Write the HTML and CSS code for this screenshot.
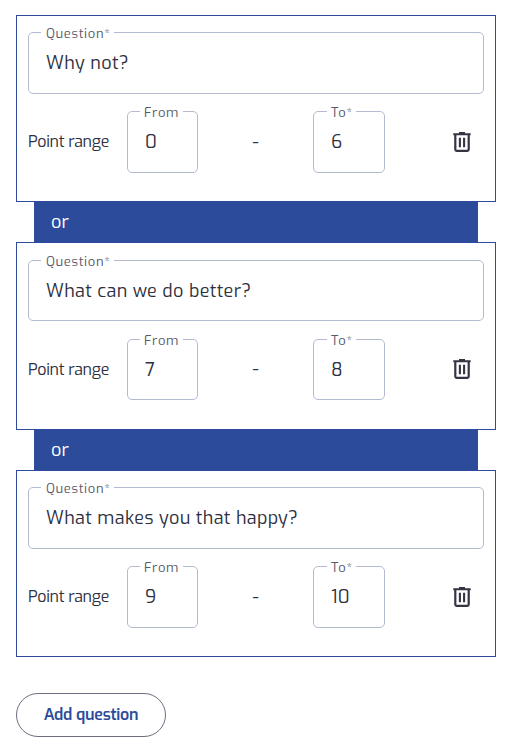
FILE: index.html
```html
<!DOCTYPE html>
<html lang="en">
<head>
  <meta charset="UTF-8">
  <meta name="viewport" content="width=device-width, initial-scale=1.0">
  <title>Questions</title>
  <link rel="stylesheet" href="styles.css">
</head>
<body>

<!-- Trash icon shared by all cards -->
<svg class="sprite" width="0" height="0">
  <symbol id="trash" viewBox="0 0 20 22">
    <path d="M1.3 3.3h17.4M7 2h6" fill="none" stroke="currentColor" stroke-width="2"/>
    <path d="M3.3 4v14.5q0 1.3 1.3 1.3h10.8q1.3 0 1.3-1.3V4" fill="none" stroke="currentColor" stroke-width="2.2"/>
    <path d="M7.9 6.8v9.4M12.1 6.8v9.4" fill="none" stroke="currentColor" stroke-width="2.1"/>
  </symbol>
</svg>

<form class="questions">
  <div class="card">
    <div class="field">
      <label class="field-label" for="q1">Question<span class="required">*</span></label>
      <input class="field-input" id="q1" type="text" value="Why not?">
    </div>
    <div class="range">
      <span class="range-title">Point range</span>
      <div class="field from">
        <label class="field-label" for="from1">From</label>
        <input class="field-input" id="from1" type="text" value="0">
      </div>
      <span class="dash">-</span>
      <div class="field to">
        <label class="field-label" for="to1">To<span class="required">*</span></label>
        <input class="field-input" id="to1" type="text" value="6">
      </div>
      <button class="delete" type="button" aria-label="Delete"><svg width="20" height="22"><use href="#trash"/></svg></button>
    </div>
  </div>

  <div class="separator">or</div>

  <div class="card">
    <div class="field">
      <label class="field-label" for="q2">Question<span class="required">*</span></label>
      <input class="field-input" id="q2" type="text" value="What can we do better?">
    </div>
    <div class="range">
      <span class="range-title">Point range</span>
      <div class="field from">
        <label class="field-label" for="from2">From</label>
        <input class="field-input" id="from2" type="text" value="7">
      </div>
      <span class="dash">-</span>
      <div class="field to">
        <label class="field-label" for="to2">To<span class="required">*</span></label>
        <input class="field-input" id="to2" type="text" value="8">
      </div>
      <button class="delete" type="button" aria-label="Delete"><svg width="20" height="22"><use href="#trash"/></svg></button>
    </div>
  </div>

  <div class="separator">or</div>

  <div class="card">
    <div class="field">
      <label class="field-label" for="q3">Question<span class="required">*</span></label>
      <input class="field-input" id="q3" type="text" value="What makes you that happy?">
    </div>
    <div class="range">
      <span class="range-title">Point range</span>
      <div class="field from">
        <label class="field-label" for="from3">From</label>
        <input class="field-input" id="from3" type="text" value="9">
      </div>
      <span class="dash">-</span>
      <div class="field to">
        <label class="field-label" for="to3">To<span class="required">*</span></label>
        <input class="field-input" id="to3" type="text" value="10">
      </div>
      <button class="delete" type="button" aria-label="Delete"><svg width="20" height="22"><use href="#trash"/></svg></button>
    </div>
  </div>

  <button class="add-btn" type="button">Add question</button>
</form>

</body>
</html>
```
FILE: styles.css
```css
* {
  box-sizing: border-box;
}

body {
  margin: 0;
  background-color: #fff;
  color: #2e3040;
  font-family: Exo, "Exo 2", Roboto, sans-serif;
}

.sprite {
  position: absolute;
}

.questions {
  width: 480px;
  margin-left: 16px;
  padding-top: 14.75px;
}

.card {
  height: 187.5px;
  padding: 16.5px 11px 0;
  border: 1px solid #2c4b9a;
}

.field {
  position: relative;
  height: 61.5px;
  border: 1px solid #b5bad3;
  border-radius: 5px;
}

.field-label {
  position: absolute;
  top: -9px;
  left: 12px;
  padding: 0 4px 0 5px;
  background-color: #fff;
  color: #585a68;
  font-size: 13px;
  line-height: 19px;
  letter-spacing: 0.65px;
  white-space: nowrap;
}

.from .field-label {
  padding-left: 4px;
}

.to .field-label {
  left: 13px;
  padding-left: 4px;
}

.required {
  font-size: 12px;
  letter-spacing: 0;
}

.field-input {
  display: block;
  width: 100%;
  height: 100%;
  padding: 0 0 0 17px;
  border: none;
  outline: none;
  background: none;
  color: #2e3040;
  font-family: inherit;
  font-size: 18px;
  letter-spacing: 0.33px;
}

.range {
  display: flex;
  align-items: center;
  margin-top: 17.5px;
}

.range-title {
  width: 99px;
  padding-bottom: 1px;
  font-size: 16px;
  letter-spacing: -0.3px;
  white-space: nowrap;
}

.from {
  width: 71px;
}

.dash {
  width: 115px;
  padding-bottom: 1px;
  text-align: center;
  font-size: 18px;
}

.to {
  width: 72px;
}

.delete {
  display: flex;
  margin-left: auto;
  margin-right: 12px;
  padding: 0 0 1px;
  border: none;
  background: none;
  color: #343543;
}

.separator {
  height: 40px;
  margin: 0 18px;
  padding-left: 17px;
  background-color: #2c4b9a;
  color: #fff;
  font-size: 18px;
  line-height: 40px;
}

.add-btn {
  display: block;
  width: 150px;
  height: 44px;
  margin-top: 36px;
  padding: 0 0 1px;
  border: 1px solid #6d6e80;
  border-radius: 22px;
  background-color: #fff;
  color: #2c4b9a;
  font-family: inherit;
  font-size: 16px;
  font-weight: 600;
  letter-spacing: -0.25px;
}
```
